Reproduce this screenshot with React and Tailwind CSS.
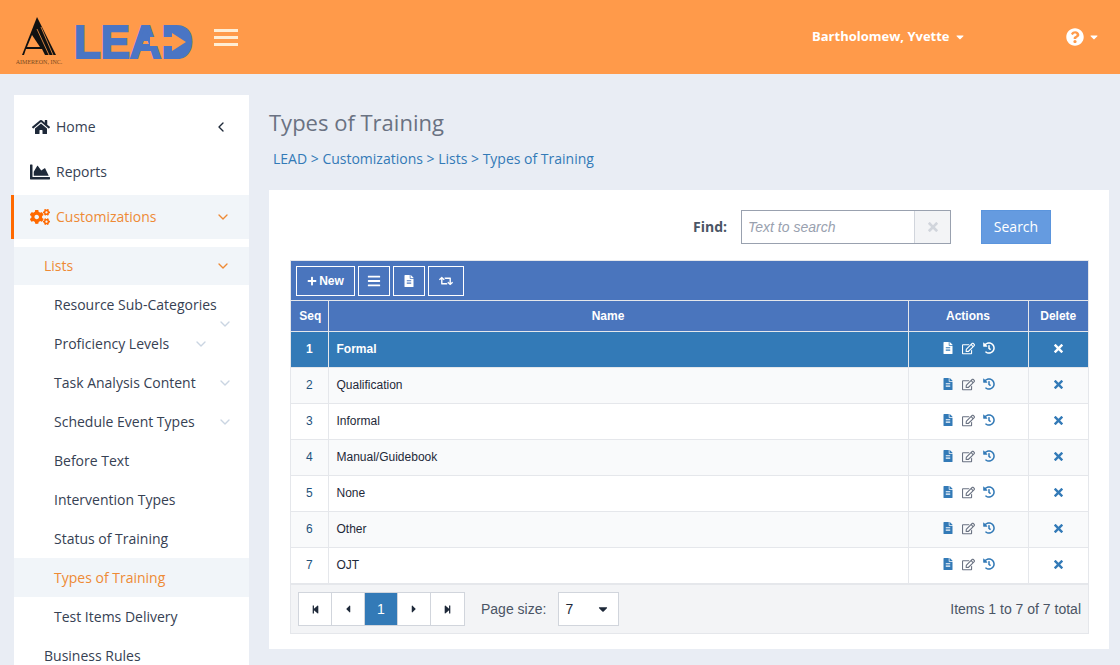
import { ChevronDown, ChevronLeft } from "lucide-react";
import {
  FaHome, FaChartArea, FaCogs, FaPlus, FaBars, FaFileAlt, FaRetweet, FaRegEdit, FaHistory,
  FaQuestionCircle, FaStepBackward, FaStepForward, FaCaretLeft, FaCaretRight, FaCaretDown,
} from "react-icons/fa";
import { ImCross } from "react-icons/im";

const subItems = [
  { label: "Resource Sub-Categories" },
  { label: "Proficiency Levels", chevron: "inline" },
  { label: "Task Analysis Content", chevron: "end" },
  { label: "Schedule Event Types", chevron: "end" },
  { label: "Before Text" },
  { label: "Intervention Types" },
  { label: "Status of Training" },
  { label: "Types of Training", active: true },
  { label: "Test Items Delivery" },
];

const rows = ["Formal", "Qualification", "Informal", "Manual/Guidebook", "None", "Other", "OJT"];

function Logo() {
  return (
    <div className="flex items-center gap-2.5">
      <svg width="48" height="60" viewBox="0 0 48 60">
        <g transform="translate(0 2)">
          <polygon points="21,8 40,46 6,46" fill="#111" />
          <polygon points="16,26 11,38 24,38" fill="#ff9a4a" />
          <polygon points="10,40 26,40 29,46 8,46" fill="#ff9a4a" />
          <path d="M21 20 L33 46 M25 18 L37 46" stroke="#ff9a4a" strokeWidth="0.8" />
          <text x="23" y="55" textAnchor="middle" fontSize="6" fontFamily="Liberation Serif, serif" fill="#7a4a20">AIMEREON, INC.</text>
        </g>
      </svg>
      <svg width="126" height="62" viewBox="0 0 126 62">
        <g transform="translate(0 9)">
          <text x="0" y="43" fontSize="46" fontWeight="700" fontFamily="Liberation Sans, sans-serif" fill="#4a75c4" stroke="#4a75c4" strokeWidth="2" textLength="119" lengthAdjust="spacingAndGlyphs">LEAD</text>
          <polygon points="71,14 64,26 78,26" fill="#4a75c4" />
          <rect x="90" y="14" width="24" height="24" fill="#4a75c4" />
          <polygon points="98,18 112,27 98,36 98,31 76,31 76,22 98,22" fill="#ff9a4a" />
        </g>
      </svg>
    </div>
  );
}

function Header() {
  return (
    <header className="flex h-[74px] items-center bg-[#ff9a4a] pl-4 text-white">
      <Logo />
      <div className="ml-3.5 flex w-6 flex-col gap-1">
        <div className="h-[3px] bg-orange-100" />
        <div className="h-[3px] bg-orange-100" />
        <div className="h-[3px] bg-orange-100" />
      </div>
      <div className="ml-[574px] flex items-center gap-1 text-[13px] font-bold">
        Bartholomew, Yvette
        <FaCaretDown className="text-xs" />
      </div>
      <div className="ml-auto mr-5 flex items-center gap-1">
        <FaQuestionCircle className="text-lg" />
        <FaCaretDown className="text-xs" />
      </div>
    </header>
  );
}

function Sidebar() {
  return (
    <aside className="relative w-[235px] shrink-0 bg-white pt-2 text-sm text-gray-700">
      <div className="relative flex h-12 items-center pl-[18px] pr-5">
        <FaHome className="mr-1.5 text-lg text-gray-800" />
        <span>Home</span>
        <ChevronLeft className="ml-auto size-4 text-gray-800" />
      </div>
      <div className="flex h-11 items-center pb-0.5 pl-4">
        <FaChartArea className="mr-1.5 text-xl text-gray-800" />
        <span>Reports</span>
      </div>
      <div className="relative flex h-11 items-center bg-slate-100 pl-4 pr-4.5 text-[#ee8a35]">
        <div className="absolute -left-[3px] top-0 h-full w-[3px] bg-orange-500" />
        <FaCogs className="mr-1.5 text-xl text-orange-500" />
        <span>Customizations</span>
        <ChevronDown className="ml-auto size-4" />
      </div>
      <div className="mt-2 flex h-[38px] items-center bg-slate-100 pl-[30px] pr-4.5 text-[#ee8a35]">
        <span>Lists</span>
        <ChevronDown className="ml-auto size-4" />
      </div>
      <div className="flex flex-col">
        {subItems.map((item) => (
          <div key={item.label} className={`relative flex h-[39px] items-center pl-10 pr-4 ${item.active ? "bg-slate-100 text-[#ee8a35]" : ""}`}>
            <span>{item.label}</span>
            {item.chevron === "inline" && <ChevronDown className="ml-6 size-4 text-slate-300" />}
            {item.chevron === "end" && <ChevronDown className="ml-auto size-4 text-slate-300" />}
            {item.label === "Resource Sub-Categories" && <ChevronDown className="absolute right-4 -bottom-2 size-4 text-slate-300" />}
          </div>
        ))}
      </div>
      <div className="flex h-[39px] items-center pl-[30px]">Business Rules</div>
    </aside>
  );
}

function ToolButton({ children, className }) {
  return <button className={`flex h-[30px] items-center justify-center gap-0.5 border border-white text-xs font-bold text-white ${className}`}>{children}</button>;
}

function PageButton({ children, active }) {
  return (
    <button className={`flex h-8 w-[33px] items-center justify-center border-r border-gray-300 text-sm last:border-r-0 ${active ? "bg-[#337ab7] text-white" : "bg-white text-gray-800"}`}>
      {children}
    </button>
  );
}

function Grid() {
  return (
    <div className="border border-gray-200" style={{ fontFamily: "Liberation Sans, Arial, sans-serif" }}>
      <div className="flex h-10 items-center gap-[3px] border-b border-gray-200 bg-[#4a75bd] px-[5px]">
        <ToolButton className="w-[59px]"><FaPlus className="text-[10px]" /> New</ToolButton>
        <ToolButton className="w-8"><FaBars className="text-sm" /></ToolButton>
        <ToolButton className="w-8"><FaFileAlt className="text-xs" /></ToolButton>
        <ToolButton className="w-9"><FaRetweet className="text-sm" /></ToolButton>
      </div>
      <table className="w-full table-fixed border-collapse text-xs">
        <thead>
          <tr className="h-[30px] bg-[#4a75bd] font-bold text-white">
            <th className="w-[37px] border-r border-gray-200 pl-0.5">Seq</th>
            <th className="border-r border-gray-200 pr-5">Name</th>
            <th className="w-[120px] border-r border-gray-200">Actions</th>
            <th className="w-[60px]">Delete</th>
          </tr>
        </thead>
        <tbody>
          {rows.map((name, i) => {
            const selected = i === 0;
            const iconColor = selected ? "text-white" : "text-[#337ab7]";
            return (
              <tr key={name} className={`h-9 border-t border-gray-200 ${selected ? "bg-[#337ab7] font-bold text-white" : i % 2 ? "bg-gray-50" : "bg-white"}`}>
                <td className={`border-r border-gray-200 text-center ${selected ? "" : "text-[#23527c]"}`}>{i + 1}</td>
                <td className={`border-r border-gray-200 px-2 ${selected ? "text-white" : "text-gray-800"}`}>{name}</td>
                <td className="border-r border-gray-200">
                  <div className="flex items-center justify-center gap-2 pb-0.5">
                    <FaFileAlt className={`text-xs ${iconColor}`} />
                    <FaRegEdit className={`text-[13px] ${selected ? "text-white" : "text-gray-500"}`} />
                    <FaHistory className={`text-xs ${iconColor}`} />
                  </div>
                </td>
                <td className="pb-0.5">
                  <ImCross className={`mx-auto text-[9px] ${selected ? "text-white" : "text-[#337ab7]"}`} />
                </td>
              </tr>
            );
          })}
        </tbody>
      </table>
      <div className="flex h-[50px] items-center border-t-2 border-gray-200 bg-gray-100 px-[7px] text-sm text-gray-600">
        <div className="flex border border-gray-300">
          <PageButton><FaStepBackward className="text-[9px]" /></PageButton>
          <PageButton><FaCaretLeft className="text-xs" /></PageButton>
          <PageButton active>1</PageButton>
          <PageButton><FaCaretRight className="text-xs" /></PageButton>
          <PageButton><FaStepForward className="text-[9px]" /></PageButton>
        </div>
        <span className="ml-4">Page size:</span>
        <div className="ml-3 flex h-[34px] w-[61px] items-center justify-between border border-gray-300 bg-white pl-1.5 pr-2 text-gray-800">
          7
          <FaCaretDown className="text-sm" />
        </div>
        <span className="ml-auto">Items 1 to 7 of 7 total</span>
      </div>
    </div>
  );
}

function Content() {
  return (
    <main className="flex-1 pl-5 pr-[11px]">
      <h1 className="pt-[11px] text-[22px] text-gray-500">Types of Training</h1>
      <div className="mt-2.5 pl-1 text-sm text-[#337ab7]">LEAD &gt; Customizations &gt; Lists &gt; Types of Training</div>
      <section className="mt-[21px] bg-white pb-[15px] pl-[21px] pr-5 pt-5">
        <div className="mb-4 flex items-center">
          <span className="ml-auto text-sm font-bold text-gray-600">Find:</span>
          <div className="ml-3.5 flex h-[34px] w-[210px] border border-gray-400">
            <div className="flex flex-1 items-center bg-white px-1.5 text-sm italic text-gray-400" style={{ fontFamily: "Liberation Sans, Arial, sans-serif" }}>Text to search</div>
            <div className="flex w-9 items-center justify-center border-l border-gray-300 bg-gray-100">
              <ImCross className="text-[10px] text-gray-300" />
            </div>
          </div>
          <button className="ml-[30px] mr-[38px] h-[34px] w-[70px] border border-[#5b95dd] bg-[#659be0] text-sm text-white">Search</button>
        </div>
        <Grid />
      </section>
    </main>
  );
}

export default function App() {
  return (
    <div className="h-screen overflow-hidden bg-[#e9edf4]" style={{ fontFamily: "Open Sans, sans-serif" }}>
      <Header />
      <div className="flex pl-3.5 pt-[21px]">
        <Sidebar />
        <Content />
      </div>
    </div>
  );
}
